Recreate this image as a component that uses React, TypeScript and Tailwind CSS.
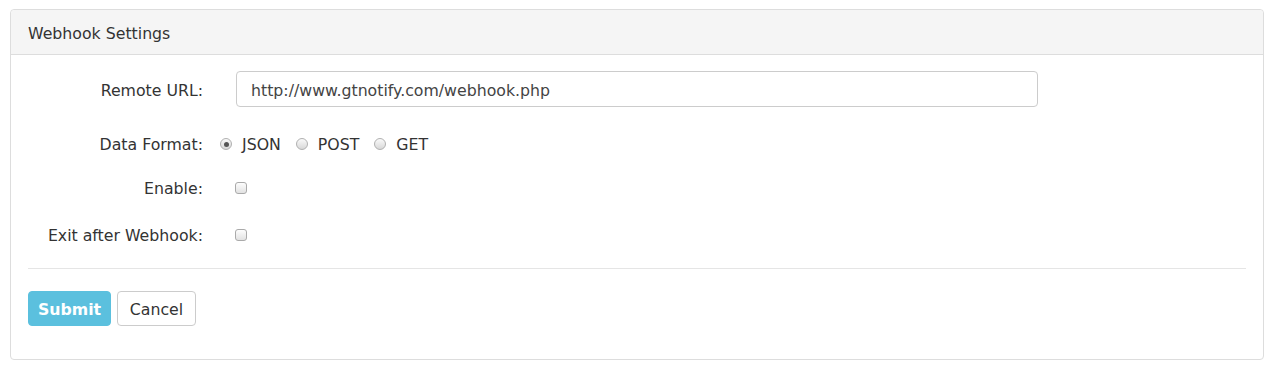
import React, { useState } from 'react';

const font = { fontFamily: '"DejaVu Sans", Verdana, sans-serif' };

const Radio: React.FC<{ checked: boolean; onClick: () => void }> = ({ checked, onClick }) => (
  <span
    onClick={onClick}
    className="flex h-[12px] w-[12px] items-center justify-center rounded-full border border-[#b0b0b0] bg-gradient-to-b from-[#fafafa] to-[#d8d8d8]"
  >
    {checked && <span className="h-[5px] w-[5px] rounded-full bg-[#555]" />}
  </span>
);

const Check: React.FC<{ checked: boolean; onClick: () => void }> = ({ checked, onClick }) => (
  <span
    onClick={onClick}
    className="flex h-[12px] w-[12px] items-center justify-center rounded-[3px] border border-[#aaa] bg-gradient-to-b from-[#fdfdfd] to-[#e2e2e2] text-[9px] leading-none text-[#444]"
  >
    {checked ? '✓' : ''}
  </span>
);

const App: React.FC = () => {
  const [url, setUrl] = useState('http://www.gtnotify.com/webhook.php');
  const [format, setFormat] = useState('JSON');
  const [enable, setEnable] = useState(false);
  const [exitAfter, setExitAfter] = useState(false);

  return (
    <div className="min-h-screen bg-white pl-[10px] pr-[11px] pt-[9px] text-[#333]" style={font}>
      {/* Panel */}
      <div className="rounded-[4px] border border-[#dddddd] text-[15.75px]">
        <div className="flex h-[45px] items-center border-b border-[#dddddd] bg-[#f5f5f5] px-[17px] pt-[3px] rounded-t-[4px]">
          Webhook Settings
        </div>

        <div className="px-[17px] pb-[33px] pt-[16px]">
          {/* Remote URL */}
          <div className="flex h-[36px] items-center">
            <label className="w-[175px] pt-[3px] text-right">Remote URL:</label>
            <input
              value={url}
              onChange={(e) => setUrl(e.target.value)}
              className="ml-[33px] h-[36px] w-[802px] rounded-[4px] border border-[#cccccc] px-[14px] pt-[3px] text-[15.75px] text-[#444] outline-none"
              style={font}
            />
          </div>

          {/* Data Format */}
          <div className="mt-[19px] flex h-[36px] items-center">
            <label className="w-[175px] pt-[2px] text-right">Data Format:</label>
            <div className="ml-[17px] flex items-center">
              {['JSON', 'POST', 'GET'].map((f) => (
                <div key={f} className="mr-[15px] flex items-center gap-[10px]" onClick={() => setFormat(f)}>
                  <Radio checked={format === f} onClick={() => setFormat(f)} />
                  <span className="pt-[2px]">{f}</span>
                </div>
              ))}
            </div>
          </div>

          {/* Enable */}
          <div className="mt-[8px] flex h-[36px] items-center">
            <label className="w-[175px] pt-[2px] text-right">Enable:</label>
            <div className="ml-[32px]">
              <Check checked={enable} onClick={() => setEnable(!enable)} />
            </div>
          </div>

          {/* Exit after Webhook */}
          <div className="mt-[11px] flex h-[36px] items-center">
            <label className="w-[175px] pt-[2px] text-right">Exit after Webhook:</label>
            <div className="ml-[32px]">
              <Check checked={exitAfter} onClick={() => setExitAfter(!exitAfter)} />
            </div>
          </div>

          <div className="mt-[15px] border-t border-[#e5e5e5]" />

          {/* Buttons */}
          <div className="mt-[22px] flex gap-[6px]">
            <button className="h-[35px] w-[83px] rounded-[4px] border border-[#5bc0de] bg-[#5bc0de] pt-[3px] font-bold text-white">
              Submit
            </button>
            <button className="h-[35px] w-[79px] rounded-[4px] border border-[#cccccc] bg-white pt-[3px] text-[#333]">
              Cancel
            </button>
          </div>
        </div>
      </div>
    </div>
  );
};

export default App;
